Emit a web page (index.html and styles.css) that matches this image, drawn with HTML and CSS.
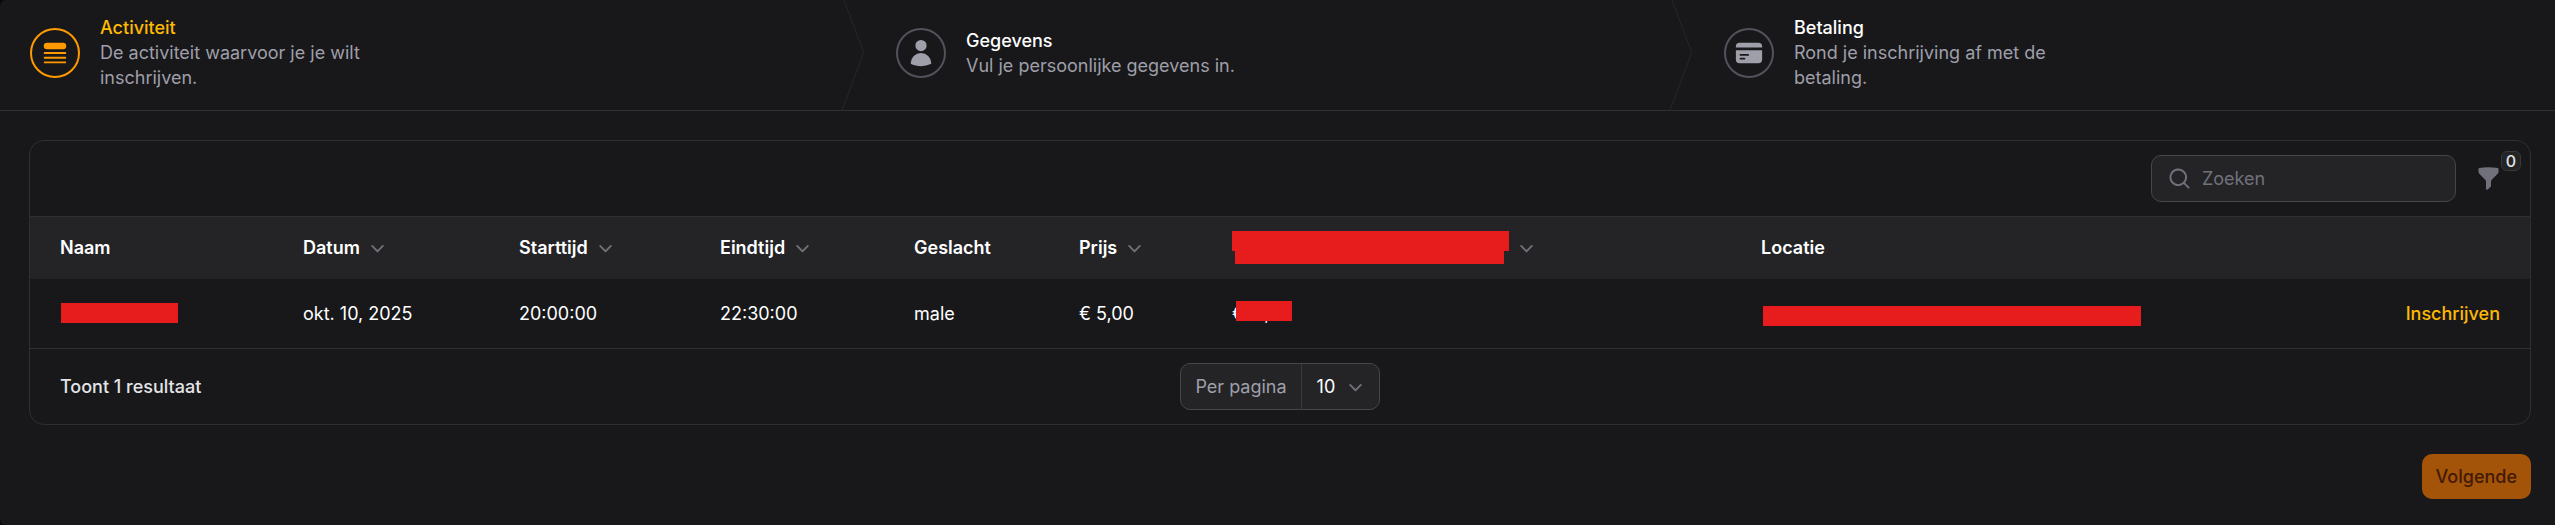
FILE: index.html
```html
<!DOCTYPE html>
<html lang="nl">
<head>
<meta charset="utf-8">
<meta name="viewport" content="width=device-width, initial-scale=1">
<title>Inschrijven</title>
<link rel="stylesheet" href="styles.css">
</head>
<body>
<svg class="sprite" aria-hidden="true">
  <symbol id="chevron" viewBox="0 0 20 20"><path d="M5.22 8.22a.75.75 0 0 1 1.06 0L10 11.94l3.72-3.72a.75.75 0 1 1 1.06 1.06l-4.25 4.25a.75.75 0 0 1-1.06 0L5.22 9.28a.75.75 0 0 1 0-1.06Z"/></symbol>
</svg>
<main class="wizard">
  <ol class="steps">
    <li class="step step-active">
      <button class="step-button" type="button" aria-current="step">
        <span class="step-icon"><svg class="icon-lg" viewBox="0 0 24 24"><path d="M5.625 3.75a2.625 2.625 0 1 0 0 5.25h12.75a2.625 2.625 0 0 0 0-5.25H5.625ZM3.75 11.25a.75.75 0 0 0 0 1.5h16.5a.75.75 0 0 0 0-1.5H3.75ZM3 15.75a.75.75 0 0 1 .75-.75h16.5a.75.75 0 0 1 0 1.5H3.75a.75.75 0 0 1-.75-.75ZM3.75 18.75a.75.75 0 0 0 0 1.5h16.5a.75.75 0 0 0 0-1.5H3.75Z"/></svg></span>
        <span class="step-text"><span class="step-title">Activiteit</span><span class="step-description">De activiteit waarvoor je je wilt inschrijven.</span></span>
      </button>
      <svg class="separator" viewBox="0 0 22 80" preserveAspectRatio="none" aria-hidden="true"><path d="M0-2L20 40 0 82" vector-effect="non-scaling-stroke"/></svg>
    </li>
    <li class="step">
      <button class="step-button" type="button">
        <span class="step-icon"><svg class="icon-lg" viewBox="0 0 24 24"><path fill-rule="evenodd" d="M7.5 6a4.5 4.5 0 1 1 9 0 4.5 4.5 0 0 1-9 0ZM3.751 20.105a8.25 8.25 0 0 1 16.498 0 .75.75 0 0 1-.437.695A18.683 18.683 0 0 1 12 22.5c-2.786 0-5.433-.608-7.812-1.7a.75.75 0 0 1-.437-.695Z"/></svg></span>
        <span class="step-text"><span class="step-title">Gegevens</span><span class="step-description">Vul je persoonlijke gegevens in.</span></span>
      </button>
      <svg class="separator" viewBox="0 0 22 80" preserveAspectRatio="none" aria-hidden="true"><path d="M0-2L20 40 0 82" vector-effect="non-scaling-stroke"/></svg>
    </li>
    <li class="step">
      <button class="step-button" type="button">
        <span class="step-icon"><svg class="icon-lg" viewBox="0 0 24 24"><path d="M4.5 3.75a3 3 0 0 0-3 3v.75h21v-.75a3 3 0 0 0-3-3h-15Z"/><path fill-rule="evenodd" d="M22.5 9.75h-21v7.5a3 3 0 0 0 3 3h15a3 3 0 0 0 3-3v-7.5Zm-18 3.75a.75.75 0 0 1 .75-.75h6a.75.75 0 0 1 0 1.5h-6a.75.75 0 0 1-.75-.75Zm.75 2.25a.75.75 0 0 0 0 1.5h3a.75.75 0 0 0 0-1.5h-3Z"/></svg></span>
        <span class="step-text"><span class="step-title">Betaling</span><span class="step-description">Rond je inschrijving af met de betaling.</span></span>
      </button>
    </li>
  </ol>

  <div class="content">
    <section class="card">
      <div class="toolbar">
        <label class="search">
          <svg class="icon" viewBox="0 0 20 20" aria-hidden="true"><path fill-rule="evenodd" d="M9 3.5a5.5 5.5 0 1 0 0 11 5.5 5.5 0 0 0 0-11ZM2 9a7 7 0 1 1 12.452 4.391l3.328 3.329a.75.75 0 1 1-1.06 1.06l-3.329-3.328A7 7 0 0 1 2 9Z"/></svg>
          <input class="search-input" type="search" placeholder="Zoeken" aria-label="Zoeken">
        </label>
        <button class="filter" type="button" aria-label="Filter">
          <svg class="icon" viewBox="0 0 20 20" aria-hidden="true"><path d="M2.628 1.601C5.028 1.206 7.49 1 10 1s4.973.206 7.372.601a.75.75 0 0 1 .628.74v2.288a2.25 2.25 0 0 1-.659 1.59l-4.682 4.683a2.25 2.25 0 0 0-.659 1.59v3.037c0 .684-.31 1.33-.844 1.757l-1.937 1.55A.75.75 0 0 1 8 18.25v-5.757a2.25 2.25 0 0 0-.659-1.591L2.659 6.22A2.25 2.25 0 0 1 2 4.629V2.34a.75.75 0 0 1 .628-.74Z"/></svg>
          <span class="badge">0</span>
        </button>
      </div>

      <table class="table">
        <colgroup>
          <col class="col-name"><col class="col-date"><col class="col-start"><col class="col-end"><col class="col-gender"><col class="col-price"><col class="col-extra"><col class="col-place"><col class="col-action">
        </colgroup>
        <thead>
          <tr>
            <th>Naam</th>
            <th><button class="sort" type="button">Datum<svg class="icon"><use href="#chevron"/></svg></button></th>
            <th><button class="sort" type="button">Starttijd<svg class="icon"><use href="#chevron"/></svg></button></th>
            <th><button class="sort" type="button">Eindtijd<svg class="icon"><use href="#chevron"/></svg></button></th>
            <th>Geslacht</th>
            <th><button class="sort" type="button">Prijs<svg class="icon"><use href="#chevron"/></svg></button></th>
            <th><button class="sort" type="button" aria-label="Sorteren"><svg class="mask-heading" viewBox="0 0 277 33"><path d="M0 0h277v20h-5v13H3V20H0Z"/></svg><svg class="icon"><use href="#chevron"/></svg></button></th>
            <th>Locatie</th>
            <th></th>
          </tr>
        </thead>
        <tbody>
          <tr>
            <td><span class="masked"><span class="mask mask-name"></span></span></td>
            <td>okt. 10, 2025</td>
            <td>20:00:00</td>
            <td>22:30:00</td>
            <td>male</td>
            <td>€ 5,00</td>
            <td><span class="masked">€&nbsp;&nbsp;&nbsp;&nbsp;,<span class="mask mask-price"></span></span></td>
            <td><span class="masked"><span class="mask mask-place"></span></span></td>
            <td class="action"><a class="link" href="#">Inschrijven</a></td>
          </tr>
        </tbody>
      </table>

      <div class="pagination">
        <span class="summary">Toont 1 resultaat</span>
        <div class="per-page">
          <label class="per-page-label" for="per-page">Per pagina</label>
          <span class="select">
            <select class="select-input" id="per-page"><option>10</option><option>25</option><option>50</option></select>
            <svg class="icon select-icon"><use href="#chevron"/></svg>
          </span>
        </div>
      </div>
    </section>
    <div class="actions"><button class="next" type="button">Volgende</button></div>
  </div>
</main>
</body>
</html>
```
FILE: styles.css
```css
* { box-sizing: border-box; }

body {
  margin: 0;
  background: #09090b;
  color: #fff;
  font: 400 18px/25px Inter, "Liberation Sans", sans-serif;
}

button, input, select {
  margin: 0;
  padding: 0;
  border: 0;
  background: none;
  color: inherit;
  font: inherit;
}

svg { display: block; fill: currentColor; }
.sprite { display: none; }
.icon { width: 25px; height: 25px; flex: none; color: #71717b; }
.icon-lg { width: 30px; height: 30px; }

.wizard {
  min-height: 100vh;
  border-radius: 6px 0 0 6px;
  background: #18181b;
}

.steps {
  display: grid;
  grid-template-columns: 866fr 828fr 861fr;
  margin: 0;
  padding: 0;
  list-style: none;
  border-bottom: 1px solid #2f2f32;
}
.step { display: flex; position: relative; }
.step-button {
  display: flex;
  flex: 1;
  align-items: center;
  gap: 20px;
  padding: 15px 30px 20px;
  text-align: left;
}
.step-icon {
  display: grid;
  place-items: center;
  width: 50px;
  height: 50px;
  border: 2px solid #52525c;
  border-radius: 50%;
  color: #9f9fa9;
}
.step-text { display: grid; max-width: 300px; }
.step-title { font-weight: 500; }
.step-description { color: #9f9fa9; }
.step-active .step-icon { border-color: #fe9a00; color: #fe9a00; }
.step-active .step-title { color: #ffb900; }
.separator {
  position: absolute;
  top: -5px;
  right: 0;
  bottom: 0;
  width: 25px;
  height: 115px;
  fill: none;
  stroke: #27272a;
}

.content { display: grid; gap: 29px; padding: 29px 24px 24px 29px; }
.card {
  border: 1px solid #2f2f32;
  border-radius: 15px;
  overflow: hidden;
}

.toolbar {
  display: flex;
  justify-content: flex-end;
  align-items: center;
  gap: 20px;
  padding: 14px 29px 14px;
}
.search {
  display: flex;
  align-items: center;
  gap: 10px;
  width: 305px;
  padding: 10px 15px;
  border: 1px solid #464649;
  border-radius: 10px;
  background: #242427;
}
.search-input { flex: 1; min-width: 0; height: 25px; outline: 0; }
.search-input::placeholder { color: #71717b; opacity: 1; }
.filter { position: relative; }
.badge {
  position: absolute;
  left: 25px;
  bottom: 20px;
  width: 20px;
  height: 20px;
  border: 1px solid #39393c;
  border-radius: 6px;
  background: #242427;
  color: #e4e4e7;
  font-size: 16px;
  font-weight: 500;
  line-height: 18px;
  text-align: center;
}

.table {
  width: 100%;
  table-layout: fixed;
  border-collapse: collapse;
  border-top: 1px solid #2f2f32;
  border-bottom: 1px solid #2f2f32;
}
.col-name { width: 10.32%; }
.col-date { width: 8.64%; }
.col-start { width: 8.04%; }
.col-end { width: 7.76%; }
.col-gender { width: 6.6%; }
.col-price { width: 6.12%; }
.col-extra { width: 21.16%; }
.col-place { width: 21.36%; }
.table th {
  height: 62px;
  padding: 0 15px;
  background: #242427;
  font-weight: 600;
  text-align: left;
}
.table td { height: 70px; padding: 0 15px; }
.table th:first-child, .table td:first-child { padding-left: 30px; }
.table .action { padding-right: 30px; text-align: right; }
.sort { display: flex; align-items: center; gap: 5px; }
.link { color: #ffb900; font-weight: 500; text-decoration: none; }

.masked { display: block; position: relative; height: 25px; }
.mask { position: absolute; height: 20px; background: #e71d1d; }
.mask-name { top: 2px; left: 1px; width: 117px; }
.mask-price { top: 0; left: 4px; width: 56px; }
.mask-place { bottom: 0; left: 2px; width: 378px; }
.mask-heading { width: 277px; height: 33px; color: #e71d1d; }

.pagination {
  display: grid;
  grid-template-columns: 1fr auto 1fr;
  align-items: center;
  padding: 14px 30px;
}
.summary { color: #e4e4e7; font-weight: 500; }
.per-page {
  display: flex;
  border: 1px solid #464649;
  border-radius: 10px;
  background: #242427;
}
.per-page-label {
  padding: 10px 14px;
  border-right: 1px solid #39393c;
  color: #9f9fa9;
}
.select { display: grid; align-items: center; }
.select-input, .select-icon { grid-area: 1 / 1; }
.select-input { width: 77px; height: 45px; padding-left: 15px; appearance: none; }
.select-icon { justify-self: end; margin-right: 11px; pointer-events: none; }

.actions { display: flex; justify-content: flex-end; }
.next {
  padding: 10px 14px;
  border-radius: 10px;
  background: #a35408;
  color: #431a05;
  font-weight: 500;
}
```
